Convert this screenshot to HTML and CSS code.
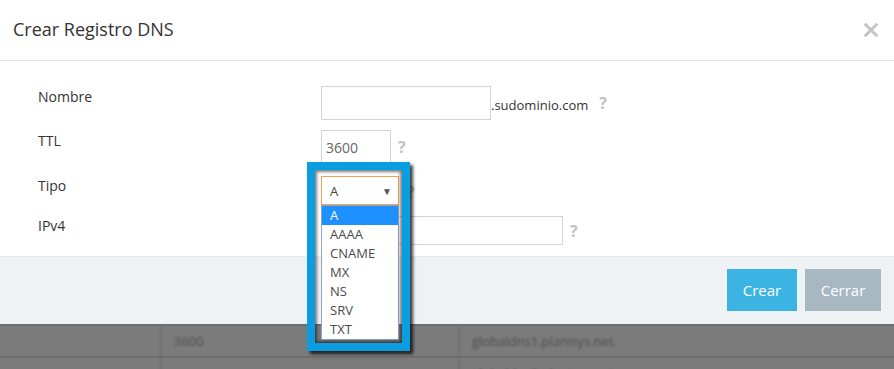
FILE: index.html
```html
<!DOCTYPE html>
<html lang="es">
<head>
<meta charset="UTF-8" />
<title>Crear Registro DNS</title>
<link rel="stylesheet" href="styles.css">
</head>
<body>
  <section class="modal" aria-label="Crear Registro DNS">
    <header class="modal-header">
      <h4>Crear Registro DNS</h4>
      <button type="button" class="close" aria-label="Cerrar">
        <svg viewBox="0 0 14 14" aria-hidden="true">
          <path d="M1.5 1.5 L12.5 12.5 M12.5 1.5 L1.5 12.5" />
        </svg>
      </button>
    </header>

    <form class="modal-body">
      <div class="form-row row-name">
        <label for="nombre">Nombre</label>
        <div class="controls">
          <input type="text" id="nombre" class="input-name" />
          <span class="suffix">.sudominio.com</span>
          <span class="help">?</span>
        </div>
      </div>
      <div class="form-row row-ttl">
        <label for="ttl">TTL</label>
        <div class="controls">
          <input type="text" id="ttl" class="input-ttl" value="3600" />
          <span class="help">?</span>
        </div>
      </div>
      <div class="form-row row-type">
        <label>Tipo</label>
        <div class="controls">
          <div class="select-wrap">
            <div class="select">
              <span>A</span>
              <span class="caret">&#9660;</span>
            </div>
            <ul class="options">
              <li class="selected">A</li>
              <li>AAAA</li>
              <li>CNAME</li>
              <li>MX</li>
              <li>NS</li>
              <li>SRV</li>
              <li>TXT</li>
            </ul>
            <div class="highlight"></div>
          </div>
          <span class="help">?</span>
        </div>
      </div>
      <div class="form-row row-ip">
        <label for="ipv4">IPv4</label>
        <div class="controls">
          <input type="text" id="ipv4" class="input-ip" />
          <span class="help">?</span>
        </div>
      </div>
    </form>

    <footer class="modal-footer">
      <button type="button" class="btn btn-primary">Crear</button>
      <button type="button" class="btn btn-default">Cerrar</button>
    </footer>
  </section>

  <!-- page behind the modal, dimmed -->
  <div class="backdrop">
    <div class="bg-row">
      <div class="cell c1"></div>
      <div class="cell c2">3600</div>
      <div class="cell c3">globaldns1.planisys.net.</div>
    </div>
    <div class="bg-row">
      <div class="cell c1"></div>
      <div class="cell c2"></div>
      <div class="cell c3">globaldns2.planisys.net.</div>
    </div>
  </div>
</body>
</html>
```

FILE: styles.css
```css
/* Reset & base */
*, *::before, *::after {
  box-sizing: border-box;
}

body {
  margin: 0;
  font-family: 'Open Sans', 'Liberation Sans', sans-serif;
  color: #333;
  background: #7b7b7b;
  overflow: hidden;
}

.modal {
  background: #fff;
}

/* Header */
.modal-header {
  display: flex;
  justify-content: space-between;
  align-items: center;
  height: 61px;
  padding: 0 15px 0 13px;
  border-bottom: 1px solid #e5e5e5;
}

.modal-header h4 {
  margin: 0 0 1px;
  font-size: 18px;
  font-weight: 400;
  line-height: 25px;
  color: #333;
}

.close {
  background: none;
  border: none;
  padding: 0;
  width: 16px;
  height: 16px;
  cursor: pointer;
}

.close svg {
  width: 16px;
  height: 16px;
  stroke: #c4c4c4;
  stroke-width: 2.6;
  fill: none;
  display: block;
}

/* Body */
.modal-body {
  padding: 25px 0 11px 38px;
  margin: 0;
}

.form-row {
  display: grid;
  grid-template-columns: 283px 1fr;
  align-items: start;
}

.row-ttl { margin-top: 10px; }
.row-type { margin-top: 12px; }
.row-ip { margin-top: 11px; }

.form-row label {
  font-size: 14px;
  line-height: 20px;
  padding-top: 1px;
  color: #333;
}

.row-type label,
.row-ip label {
  padding-top: 0;
}

.controls {
  display: flex;
  align-items: center;
}

input {
  font-family: inherit;
  font-size: 14px;
  color: #666;
  border: 1px solid #d4d4d4;
  border-radius: 0;
  padding: 0 4px;
  margin: 0;
  height: 34px;
  outline: none;
  background: #fff;
}

.input-name { width: 170px; }
.input-ttl { width: 70px; }
.input-ip { width: 242px; height: 29px; }

.suffix {
  font-size: 13px;
  color: #333;
  padding-right: 4px;
  margin-top: 3px;
}

.help {
  font-size: 16px;
  font-weight: 700;
  color: #c2c2c2;
  margin-left: 7px;
  line-height: 1;
}

/* Select with open list */
.select-wrap {
  position: relative;
}

.select {
  display: flex;
  justify-content: space-between;
  align-items: center;
  width: 78px;
  height: 29px;
  padding: 0 6px 0 8px;
  border: 1px solid #f0a24c;
  font-size: 13px;
  color: #444;
}

.caret {
  font-size: 10px;
  color: #555;
}

.options {
  position: absolute;
  top: 29px;
  left: 0;
  width: 78px;
  margin: 0;
  padding: 0;
  list-style: none;
  background: #fff;
  border: 1px solid #8ea6c4;
  z-index: 2;
}

.options li {
  height: 19px;
  line-height: 19px;
  padding-left: 8px;
  font-size: 13px;
  color: #4a4a4a;
}

.options li.selected {
  background: #1e90ff;
  color: #fff;
}

/* Callout frame drawn over the list */
.highlight {
  position: absolute;
  left: -14px;
  top: -14px;
  width: 103px;
  height: 189px;
  border: 8px solid #0a9ddf;
  box-shadow: 3px 3px 3px rgb(0 0 0 / 0.75), inset 0 0 3px 2px rgb(0 0 0 / 0.5);
  pointer-events: none;
  z-index: 3;
}

.row-type .help {
  margin-left: 8px;
  margin-top: 2px;
}

/* Footer */
.modal-footer {
  display: flex;
  justify-content: flex-end;
  gap: 8px;
  height: 68px;
  padding: 12px 13px 0 0;
  background: #eef2f5;
  border-top: 1px solid #e4e8ec;
}

.btn {
  height: 42px;
  border: none;
  border-radius: 0;
  font-family: inherit;
  font-size: 15px;
  color: #fff;
  cursor: pointer;
}

.btn-primary {
  width: 70px;
  background: #3bb4e4;
}

.btn-default {
  width: 76px;
  background: #a7b8c2;
}

/* Dimmed page behind */
.backdrop {
  border-top: 2px solid #6e6e6e;
}

.bg-row {
  display: grid;
  grid-template-columns: 160px 298px 1fr;
  height: 32px;
  border-bottom: 2px solid #6e6e6e;
}

.cell {
  font-size: 13px;
  line-height: 30px;
  color: #4f4f4f;
  padding-left: 12px;
  filter: blur(0.8px);
}

.c2, .c3 {
  border-left: 2px solid #6e6e6e;
}
```
